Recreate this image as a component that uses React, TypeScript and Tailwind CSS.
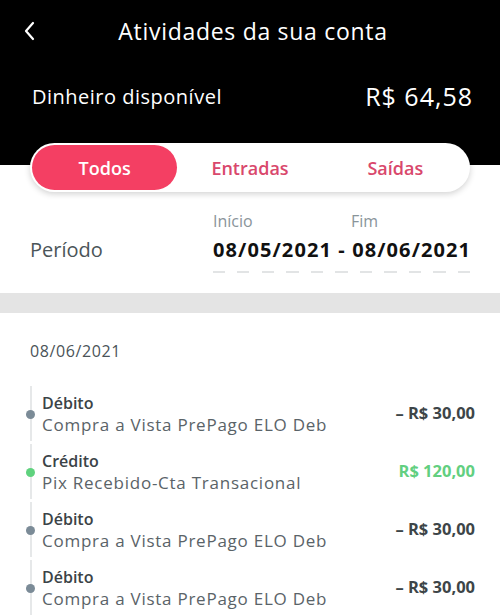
const items = [
  { kind: 'Débito', desc: 'Compra a Vista PrePago ELO Deb', amount: '– R$ 30,00', credit: false },
  { kind: 'Crédito', desc: 'Pix Recebido-Cta Transacional', amount: 'R$ 120,00', credit: true },
  { kind: 'Débito', desc: 'Compra a Vista PrePago ELO Deb', amount: '– R$ 30,00', credit: false },
  { kind: 'Débito', desc: 'Compra a Vista PrePago ELO Deb', amount: '– R$ 30,00', credit: false },
]

function TimelineItem({ kind, desc, amount, credit }: (typeof items)[number]) {
  return (
    <div className="relative flex items-center h-[55px] mb-[3px] ml-[30px] border-l-[2px] border-[#e6e8e9] pl-[10px] pr-[25px]">
      <span
        className={`absolute left-[-6px] top-[24px] w-[9px] h-[9px] rounded-full ${credit ? 'bg-[#5fd27e]' : 'bg-[#7b8b97]'}`}
      />
      <div className="flex-1 flex flex-col leading-[22px]">
        <span className="text-[16px] font-semibold text-[#3b4347]">{kind}</span>
        <span className="text-[17px] tracking-[0.75px] text-[#5a6368]">{desc}</span>
      </div>
      <span className={`text-[16.5px] font-bold ${credit ? 'text-[#62cf80]' : 'text-[#3d4548]'}`}>{amount}</span>
    </div>
  )
}

export default function App() {
  return (
    <div className="w-[500px] h-[616px] overflow-hidden bg-white font-['Open_Sans',sans-serif]">
      <div className="bg-black text-white">
        <div className="relative flex items-center justify-center h-[62px]">
          <svg className="absolute left-[23px] top-[21px]" width="14" height="20" viewBox="0 0 14 20" fill="none">
            <path d="M10 2 L3 10 L10 18" stroke="white" strokeWidth="2.2" strokeLinecap="round" strokeLinejoin="round" />
          </svg>
          <span className="text-[23px] font-medium tracking-[0.7px] pl-[6px]">Atividades da sua conta</span>
        </div>
        <div className="flex items-center justify-between h-[70px] pl-[32px] pr-[27px]">
          <span className="text-[20px] tracking-[0.5px]">Dinheiro disponível</span>
          <span className="text-[25px] font-medium tracking-[1px]">R$ 64,58</span>
        </div>
        <div className="h-[11px]" />
      </div>
      <div className="px-[30px] bg-[linear-gradient(to_bottom,#000_22px,#fff_22px)]">
        <div className="grid grid-cols-3 h-[49px] p-[2px] rounded-full bg-white shadow-[0_2px_6px_rgba(0,0,0,0.18)]">
          <div className="flex items-center justify-center pt-[2px] rounded-full bg-[#f43f63] text-white text-[18px] font-semibold">
            Todos
          </div>
          <div className="flex items-center justify-center pt-[2px] text-[#d9486c] text-[18px] font-semibold">Entradas</div>
          <div className="flex items-center justify-center pt-[2px] text-[#d9486c] text-[18px] font-semibold">Saídas</div>
        </div>
      </div>
      <div className="flex items-end h-[101px] pl-[30px] pb-[20px]">
        <span className="w-[183px] text-[20px] text-[#4b5559] mb-[8px]">Período</span>
        <div className="flex flex-col">
          <div className="flex text-[16px] text-[#89949a] leading-[20px]">
            <span className="w-[138px]">Início</span>
            <span>Fim</span>
          </div>
          <span className="text-[20px] font-bold tracking-[1.1px] text-[#111] mt-[7px] leading-[24px]">
            08/05/2021 - 08/06/2021
          </span>
          <div className="mt-[9px] w-[258px] h-[2px] bg-[repeating-linear-gradient(to_right,#e2e4e5_0_12px,transparent_12px_24.5px)]" />
        </div>
      </div>
      <div className="h-[20px] bg-[#e4e4e4]" />
      <div className="pl-[30px] pt-[26px] pb-[23px] text-[16px] tracking-[0.6px] text-[#4a5358]">08/06/2021</div>
      <div>
        {items.map((it, i) => (
          <TimelineItem key={i} {...it} />
        ))}
      </div>
    </div>
  )
}
